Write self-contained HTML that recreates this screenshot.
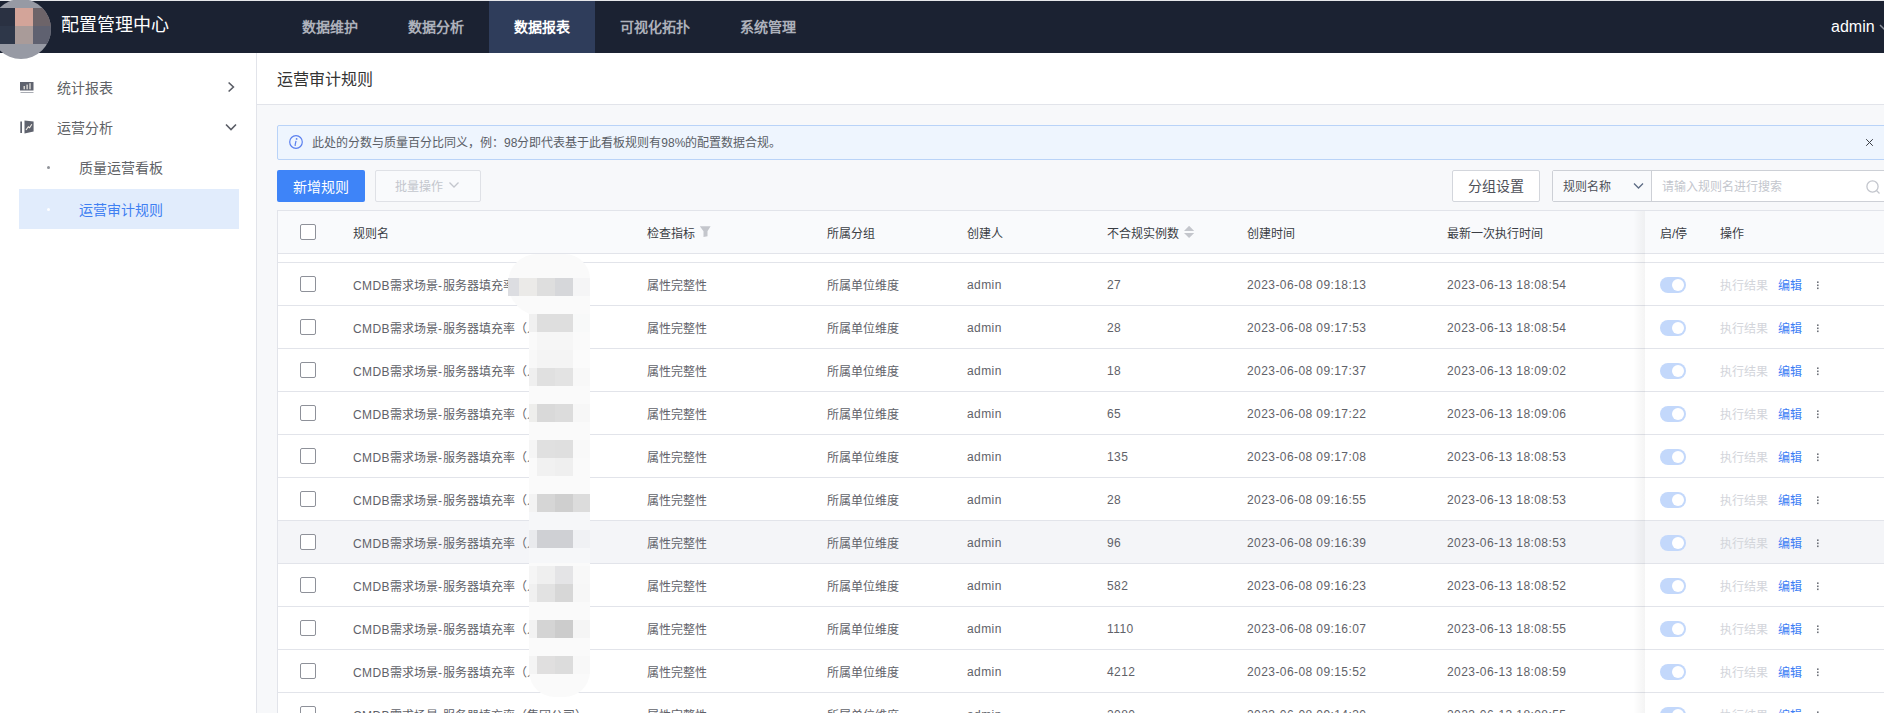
<!DOCTYPE html>
<html lang="zh-CN"><head><meta charset="utf-8">
<style>
*{margin:0;padding:0;box-sizing:border-box}
html,body{width:1884px;height:713px;overflow:hidden;background:#f7f8fa;font-family:"Liberation Sans",sans-serif;color:#606266}
.abs{position:absolute}
#hdr{position:absolute;left:0;top:0;width:1884px;height:53px;background:#1b2232;border-top:1px solid #e6e7ea;z-index:5}
.nav{position:absolute;top:0;height:52px;line-height:53px;font-size:14px;font-weight:bold;color:#adb1bb;white-space:nowrap}
.nav.act{background:#2f3d5b;color:#fff}
#side{position:absolute;left:0;top:53px;width:257px;height:660px;background:#fff;border-right:1px solid #e2e4ea}
.si{position:absolute;font-size:14px;color:#606266;white-space:nowrap;line-height:20px}
#main{position:absolute;left:257px;top:53px;width:1627px;height:660px}
#ttl{position:absolute;left:0;top:0;width:1627px;height:52px;background:#fff;border-bottom:1px solid #e2e4ea}
.t12{font-size:12px;white-space:nowrap;line-height:16px}
.lt{letter-spacing:0.42px}
</style></head>
<body>
<div id="hdr">
  <div class="abs" style="left:-9px;top:-2px;width:60px;height:60px;border-radius:50%;background:#979aa4;overflow:hidden">
    <div class="abs" style="left:9px;top:9px;width:15px;height:18px;background:#2a3142"></div>
    <div class="abs" style="left:24px;top:9px;width:18px;height:18px;background:#d3a499"></div>
    <div class="abs" style="left:42px;top:9px;width:18px;height:18px;background:#6d6469"></div>
    <div class="abs" style="left:9px;top:27px;width:15px;height:18px;background:#2e3749"></div>
    <div class="abs" style="left:24px;top:27px;width:18px;height:18px;background:#a99b99"></div>
    <div class="abs" style="left:42px;top:27px;width:18px;height:18px;background:#5f6170"></div>
  </div>
  <div class="abs" style="left:61px;top:12px;font-size:18px;line-height:24px;color:#fff;white-space:nowrap">配置管理中心</div>
  <div class="nav" style="left:277px;width:106px;text-align:center">数据维护</div>
  <div class="nav" style="left:383px;width:106px;text-align:center">数据分析</div>
  <div class="nav act" style="left:489px;width:106px;text-align:center">数据报表</div>
  <div class="nav" style="left:595px;width:120px;text-align:center">可视化拓扑</div>
  <div class="nav" style="left:715px;width:106px;text-align:center">系统管理</div>
  <div class="abs" style="left:1831px;top:16px;font-size:16px;line-height:20px;color:#fff">admin</div>
  <svg class="abs" style="left:1879px;top:22px" width="10" height="8"><path d="M1 2 L5 6 L9 2" stroke="#8a8f9a" stroke-width="1.5" fill="none"/></svg>
</div>

<div id="side">
  <!-- 统计报表 -->
  <svg class="abs" style="left:20px;top:29px" width="14" height="12" viewBox="0 0 14 12"><rect x="0" y="0" width="13.5" height="8.5" fill="#5f636e"/><rect x="0.5" y="10" width="13" height="1" fill="#a9acb3"/><rect x="3.6" y="4" width="1.2" height="3.3" fill="#f3efe8"/><rect x="6.5" y="2.6" width="1.2" height="4.7" fill="#f3efe8"/><rect x="9.4" y="1.2" width="1.2" height="6.1" fill="#f3efe8"/></svg>
  <div class="si" style="left:57px;top:25px">统计报表</div>
  <svg class="abs" style="left:226px;top:28px" width="10" height="12"><path d="M2.6 1.5 L7.4 6 L2.6 10.5" stroke="#5a5d66" stroke-width="1.6" fill="none"/></svg>
  <!-- 运营分析 -->
  <svg class="abs" style="left:20px;top:67px" width="14" height="14" viewBox="0 0 14 14"><rect x="0.3" y="1.5" width="1.7" height="11.5" fill="#5f636e"/><path d="M4.5 0.5 L13.6 1.6 L13.6 11.4 L4.5 13.5 Z" fill="#5f636e"/><path d="M6 10 L8.3 6.8 L9.6 7.8 L11.8 4.3" stroke="#f3efe8" stroke-width="1.1" fill="none"/></svg>
  <div class="si" style="left:57px;top:65px">运营分析</div>
  <svg class="abs" style="left:224px;top:69px" width="14" height="10"><path d="M2 2.5 L7 7.5 L12 2.5" stroke="#5a5d66" stroke-width="1.6" fill="none"/></svg>
  <div class="abs" style="left:47px;top:113px;width:3px;height:3px;border-radius:50%;background:#909399"></div>
  <div class="si" style="left:79px;top:105px">质量运营看板</div>
  <div class="abs" style="left:19px;top:136px;width:220px;height:40px;background:#e1ecfc"></div>
  <div class="abs" style="left:47px;top:155px;width:3px;height:3px;border-radius:50%;background:#fff"></div>
  <div class="si" style="left:79px;top:147px;color:#3f80f2">运营审计规则</div>
</div>

<div id="main">
  <div id="ttl"><div class="abs" style="left:20px;top:16px;font-size:16px;line-height:22px;color:#333;white-space:nowrap">运营审计规则</div></div>
</div>
<div class="abs" style="left:277px;top:125px;width:1620px;height:35px;background:#eef5fe;border:1px solid #b9d3f8;border-radius:2px"></div>
<svg class="abs" style="left:289px;top:135px" width="14" height="14" viewBox="0 0 14 14"><circle cx="7" cy="7" r="6.3" stroke="#5b80ef" stroke-width="1.2" fill="none"/><circle cx="7.6" cy="3.9" r="0.9" fill="#5b80ef"/><path d="M7 5.8 L6.1 10 Q6 10.7 6.7 10.4" stroke="#5b80ef" stroke-width="1.2" fill="none"/></svg>
<div class="abs t12" style="left:312px;top:135px;color:#5a5e66">此处的分数与质量百分比同义，例：98分即代表基于此看板规则有98%的配置数据合规。</div>
<svg class="abs" style="left:1865px;top:138px" width="9" height="9"><path d="M1.2 1.2 L7.8 7.8 M7.8 1.2 L1.2 7.8" stroke="#3a3d44" stroke-width="1"/></svg>
<div class="abs" style="left:277px;top:170px;width:88px;height:32px;background:#3e84f8;border-radius:2px;color:#fff;font-size:14px;line-height:34px;text-align:center">新增规则</div>
<div class="abs" style="left:375px;top:170px;width:106px;height:32px;background:#f9fafc;border:1px solid #dfe1e6;border-radius:2px"></div>
<div class="abs" style="left:395px;top:179px;font-size:12px;line-height:16px;color:#c3c6cd;white-space:nowrap">批量操作</div>
<svg class="abs" style="left:448px;top:181px" width="12" height="8"><path d="M1.5 1.5 L6 6 L10.5 1.5" stroke="#c3c6cd" stroke-width="1.3" fill="none"/></svg>
<div class="abs" style="left:1452px;top:170px;width:88px;height:32px;background:#fff;border:1px solid #d3d6dc;border-radius:2px;color:#4d5058;font-size:14px;line-height:31px;text-align:center">分组设置</div>
<div class="abs" style="left:1552px;top:170px;width:340px;height:32px;background:#fff;border:1px solid #cdd0d6;border-radius:2px"></div>
<div class="abs" style="left:1553px;top:171px;width:99px;height:30px;background:#f9fafc;border-right:1px solid #cdd0d6"></div>
<div class="abs t12" style="left:1563px;top:179px;color:#4d5058">规则名称</div>
<svg class="abs" style="left:1633px;top:182px" width="11" height="8"><path d="M1 1.5 L5.5 6 L10 1.5" stroke="#5d6b84" stroke-width="1.3" fill="none"/></svg>
<div class="abs t12" style="left:1662px;top:179px;color:#c3c6cd">请输入规则名进行搜索</div>
<svg class="abs" style="left:1865px;top:179px" width="16" height="16"><circle cx="7.5" cy="7.5" r="5.6" stroke="#c3c6cd" stroke-width="1.3" fill="none"/><path d="M11.5 11.5 L14.5 14.5" stroke="#c3c6cd" stroke-width="1.3"/></svg>
<div class="abs" style="left:277px;top:210px;width:1620px;height:510px;background:#fff;border-left:1px solid #e2e4ea;border-top:1px solid #e2e4ea"></div>
<div class="abs" style="left:278px;top:211px;width:1620px;height:43px;background:#f9fafc;border-bottom:1px solid #e2e4ea"></div>
<div class="abs" style="left:278px;top:262px;width:1620px;height:1px;background:#e2e4ea"></div>
<div class="abs" style="left:278px;top:263px;width:1620px;height:43px;background:#fff;border-bottom:1px solid #e2e4ea"></div>
<div class="abs" style="left:278px;top:306px;width:1620px;height:43px;background:#fff;border-bottom:1px solid #e2e4ea"></div>
<div class="abs" style="left:278px;top:349px;width:1620px;height:43px;background:#fff;border-bottom:1px solid #e2e4ea"></div>
<div class="abs" style="left:278px;top:392px;width:1620px;height:43px;background:#fff;border-bottom:1px solid #e2e4ea"></div>
<div class="abs" style="left:278px;top:435px;width:1620px;height:43px;background:#fff;border-bottom:1px solid #e2e4ea"></div>
<div class="abs" style="left:278px;top:478px;width:1620px;height:43px;background:#fff;border-bottom:1px solid #e2e4ea"></div>
<div class="abs" style="left:278px;top:521px;width:1620px;height:43px;background:#f4f5f8;border-bottom:1px solid #e2e4ea"></div>
<div class="abs" style="left:278px;top:564px;width:1620px;height:43px;background:#fff;border-bottom:1px solid #e2e4ea"></div>
<div class="abs" style="left:278px;top:607px;width:1620px;height:43px;background:#fff;border-bottom:1px solid #e2e4ea"></div>
<div class="abs" style="left:278px;top:650px;width:1620px;height:43px;background:#fff;border-bottom:1px solid #e2e4ea"></div>
<div class="abs" style="left:278px;top:693px;width:1620px;height:43px;background:#fff;border-bottom:1px solid #e2e4ea"></div>
<div class="abs" style="left:300px;top:224px;width:16px;height:16px;border:1px solid #8e9199;border-radius:2px;background:#fff"></div>
<div class="abs t12" style="left:353px;top:226px;color:#3a3d44">规则名</div>
<div class="abs t12" style="left:647px;top:226px;color:#3a3d44">检查指标</div>
<div class="abs t12" style="left:827px;top:226px;color:#3a3d44">所属分组</div>
<div class="abs t12" style="left:967px;top:226px;color:#3a3d44">创建人</div>
<div class="abs t12" style="left:1107px;top:226px;color:#3a3d44">不合规实例数</div>
<div class="abs t12" style="left:1247px;top:226px;color:#3a3d44">创建时间</div>
<div class="abs t12" style="left:1447px;top:226px;color:#3a3d44">最新一次执行时间</div>
<svg class="abs" style="left:700px;top:226px" width="11" height="12"><path d="M-0.2 0.3 H10.6 L7.5 5.2 V10.2 L3.5 11 V5.2 Z" fill="#c4c6cc"/></svg>
<svg class="abs" style="left:1184px;top:226px" width="11" height="12"><path d="M5.1 -0.2 L10.2 4.9 H0 Z M5.1 12 L10.2 6.9 H0 Z" fill="#c4c6cc"/></svg>
<div class="abs" style="left:300px;top:276px;width:16px;height:16px;border:1px solid #8e9199;border-radius:2px;background:#fff"></div>
<div class="abs t12" style="left:353px;top:278px;color:#5f6269"><span class="lt">CMDB</span>需求场景<span style="letter-spacing:1px">-</span>服务器填充率（人</div>
<div class="abs t12" style="left:647px;top:278px;color:#5f6269">属性完整性</div>
<div class="abs t12" style="left:827px;top:278px;color:#5f6269">所属单位维度</div>
<div class="abs t12" style="left:967px;top:277px;color:#5f6269"><span class="lt">admin</span></div>
<div class="abs t12" style="left:1107px;top:277px;color:#5f6269"><span class="lt">27</span></div>
<div class="abs t12" style="left:1247px;top:277px;color:#5f6269"><span class="lt">2023-06-08 09:18:13</span></div>
<div class="abs t12" style="left:1447px;top:277px;color:#5f6269"><span class="lt">2023-06-13 18:08:54</span></div>
<div class="abs" style="left:300px;top:319px;width:16px;height:16px;border:1px solid #8e9199;border-radius:2px;background:#fff"></div>
<div class="abs t12" style="left:353px;top:321px;color:#5f6269"><span class="lt">CMDB</span>需求场景<span style="letter-spacing:1px">-</span>服务器填充率（人</div>
<div class="abs t12" style="left:647px;top:321px;color:#5f6269">属性完整性</div>
<div class="abs t12" style="left:827px;top:321px;color:#5f6269">所属单位维度</div>
<div class="abs t12" style="left:967px;top:320px;color:#5f6269"><span class="lt">admin</span></div>
<div class="abs t12" style="left:1107px;top:320px;color:#5f6269"><span class="lt">28</span></div>
<div class="abs t12" style="left:1247px;top:320px;color:#5f6269"><span class="lt">2023-06-08 09:17:53</span></div>
<div class="abs t12" style="left:1447px;top:320px;color:#5f6269"><span class="lt">2023-06-13 18:08:54</span></div>
<div class="abs" style="left:300px;top:362px;width:16px;height:16px;border:1px solid #8e9199;border-radius:2px;background:#fff"></div>
<div class="abs t12" style="left:353px;top:364px;color:#5f6269"><span class="lt">CMDB</span>需求场景<span style="letter-spacing:1px">-</span>服务器填充率（人</div>
<div class="abs t12" style="left:647px;top:364px;color:#5f6269">属性完整性</div>
<div class="abs t12" style="left:827px;top:364px;color:#5f6269">所属单位维度</div>
<div class="abs t12" style="left:967px;top:363px;color:#5f6269"><span class="lt">admin</span></div>
<div class="abs t12" style="left:1107px;top:363px;color:#5f6269"><span class="lt">18</span></div>
<div class="abs t12" style="left:1247px;top:363px;color:#5f6269"><span class="lt">2023-06-08 09:17:37</span></div>
<div class="abs t12" style="left:1447px;top:363px;color:#5f6269"><span class="lt">2023-06-13 18:09:02</span></div>
<div class="abs" style="left:300px;top:405px;width:16px;height:16px;border:1px solid #8e9199;border-radius:2px;background:#fff"></div>
<div class="abs t12" style="left:353px;top:407px;color:#5f6269"><span class="lt">CMDB</span>需求场景<span style="letter-spacing:1px">-</span>服务器填充率（人</div>
<div class="abs t12" style="left:647px;top:407px;color:#5f6269">属性完整性</div>
<div class="abs t12" style="left:827px;top:407px;color:#5f6269">所属单位维度</div>
<div class="abs t12" style="left:967px;top:406px;color:#5f6269"><span class="lt">admin</span></div>
<div class="abs t12" style="left:1107px;top:406px;color:#5f6269"><span class="lt">65</span></div>
<div class="abs t12" style="left:1247px;top:406px;color:#5f6269"><span class="lt">2023-06-08 09:17:22</span></div>
<div class="abs t12" style="left:1447px;top:406px;color:#5f6269"><span class="lt">2023-06-13 18:09:06</span></div>
<div class="abs" style="left:300px;top:448px;width:16px;height:16px;border:1px solid #8e9199;border-radius:2px;background:#fff"></div>
<div class="abs t12" style="left:353px;top:450px;color:#5f6269"><span class="lt">CMDB</span>需求场景<span style="letter-spacing:1px">-</span>服务器填充率（人</div>
<div class="abs t12" style="left:647px;top:450px;color:#5f6269">属性完整性</div>
<div class="abs t12" style="left:827px;top:450px;color:#5f6269">所属单位维度</div>
<div class="abs t12" style="left:967px;top:449px;color:#5f6269"><span class="lt">admin</span></div>
<div class="abs t12" style="left:1107px;top:449px;color:#5f6269"><span class="lt">135</span></div>
<div class="abs t12" style="left:1247px;top:449px;color:#5f6269"><span class="lt">2023-06-08 09:17:08</span></div>
<div class="abs t12" style="left:1447px;top:449px;color:#5f6269"><span class="lt">2023-06-13 18:08:53</span></div>
<div class="abs" style="left:300px;top:491px;width:16px;height:16px;border:1px solid #8e9199;border-radius:2px;background:#fff"></div>
<div class="abs t12" style="left:353px;top:493px;color:#5f6269"><span class="lt">CMDB</span>需求场景<span style="letter-spacing:1px">-</span>服务器填充率（人</div>
<div class="abs t12" style="left:647px;top:493px;color:#5f6269">属性完整性</div>
<div class="abs t12" style="left:827px;top:493px;color:#5f6269">所属单位维度</div>
<div class="abs t12" style="left:967px;top:492px;color:#5f6269"><span class="lt">admin</span></div>
<div class="abs t12" style="left:1107px;top:492px;color:#5f6269"><span class="lt">28</span></div>
<div class="abs t12" style="left:1247px;top:492px;color:#5f6269"><span class="lt">2023-06-08 09:16:55</span></div>
<div class="abs t12" style="left:1447px;top:492px;color:#5f6269"><span class="lt">2023-06-13 18:08:53</span></div>
<div class="abs" style="left:300px;top:534px;width:16px;height:16px;border:1px solid #8e9199;border-radius:2px;background:#fff"></div>
<div class="abs t12" style="left:353px;top:536px;color:#5f6269"><span class="lt">CMDB</span>需求场景<span style="letter-spacing:1px">-</span>服务器填充率（人</div>
<div class="abs t12" style="left:647px;top:536px;color:#5f6269">属性完整性</div>
<div class="abs t12" style="left:827px;top:536px;color:#5f6269">所属单位维度</div>
<div class="abs t12" style="left:967px;top:535px;color:#5f6269"><span class="lt">admin</span></div>
<div class="abs t12" style="left:1107px;top:535px;color:#5f6269"><span class="lt">96</span></div>
<div class="abs t12" style="left:1247px;top:535px;color:#5f6269"><span class="lt">2023-06-08 09:16:39</span></div>
<div class="abs t12" style="left:1447px;top:535px;color:#5f6269"><span class="lt">2023-06-13 18:08:53</span></div>
<div class="abs" style="left:300px;top:577px;width:16px;height:16px;border:1px solid #8e9199;border-radius:2px;background:#fff"></div>
<div class="abs t12" style="left:353px;top:579px;color:#5f6269"><span class="lt">CMDB</span>需求场景<span style="letter-spacing:1px">-</span>服务器填充率（人</div>
<div class="abs t12" style="left:647px;top:579px;color:#5f6269">属性完整性</div>
<div class="abs t12" style="left:827px;top:579px;color:#5f6269">所属单位维度</div>
<div class="abs t12" style="left:967px;top:578px;color:#5f6269"><span class="lt">admin</span></div>
<div class="abs t12" style="left:1107px;top:578px;color:#5f6269"><span class="lt">582</span></div>
<div class="abs t12" style="left:1247px;top:578px;color:#5f6269"><span class="lt">2023-06-08 09:16:23</span></div>
<div class="abs t12" style="left:1447px;top:578px;color:#5f6269"><span class="lt">2023-06-13 18:08:52</span></div>
<div class="abs" style="left:300px;top:620px;width:16px;height:16px;border:1px solid #8e9199;border-radius:2px;background:#fff"></div>
<div class="abs t12" style="left:353px;top:622px;color:#5f6269"><span class="lt">CMDB</span>需求场景<span style="letter-spacing:1px">-</span>服务器填充率（人</div>
<div class="abs t12" style="left:647px;top:622px;color:#5f6269">属性完整性</div>
<div class="abs t12" style="left:827px;top:622px;color:#5f6269">所属单位维度</div>
<div class="abs t12" style="left:967px;top:621px;color:#5f6269"><span class="lt">admin</span></div>
<div class="abs t12" style="left:1107px;top:621px;color:#5f6269"><span class="lt">1110</span></div>
<div class="abs t12" style="left:1247px;top:621px;color:#5f6269"><span class="lt">2023-06-08 09:16:07</span></div>
<div class="abs t12" style="left:1447px;top:621px;color:#5f6269"><span class="lt">2023-06-13 18:08:55</span></div>
<div class="abs" style="left:300px;top:663px;width:16px;height:16px;border:1px solid #8e9199;border-radius:2px;background:#fff"></div>
<div class="abs t12" style="left:353px;top:665px;color:#5f6269"><span class="lt">CMDB</span>需求场景<span style="letter-spacing:1px">-</span>服务器填充率（人</div>
<div class="abs t12" style="left:647px;top:665px;color:#5f6269">属性完整性</div>
<div class="abs t12" style="left:827px;top:665px;color:#5f6269">所属单位维度</div>
<div class="abs t12" style="left:967px;top:664px;color:#5f6269"><span class="lt">admin</span></div>
<div class="abs t12" style="left:1107px;top:664px;color:#5f6269"><span class="lt">4212</span></div>
<div class="abs t12" style="left:1247px;top:664px;color:#5f6269"><span class="lt">2023-06-08 09:15:52</span></div>
<div class="abs t12" style="left:1447px;top:664px;color:#5f6269"><span class="lt">2023-06-13 18:08:59</span></div>
<div class="abs" style="left:300px;top:706px;width:16px;height:16px;border:1px solid #8e9199;border-radius:2px;background:#fff"></div>
<div class="abs t12" style="left:353px;top:708px;color:#5f6269"><span class="lt">CMDB</span>需求场景<span style="letter-spacing:1px">-</span>服务器填充率（集团公司）</div>
<div class="abs t12" style="left:647px;top:708px;color:#5f6269">属性完整性</div>
<div class="abs t12" style="left:827px;top:708px;color:#5f6269">所属单位维度</div>
<div class="abs t12" style="left:967px;top:707px;color:#5f6269"><span class="lt">admin</span></div>
<div class="abs t12" style="left:1107px;top:707px;color:#5f6269"><span class="lt">2080</span></div>
<div class="abs t12" style="left:1247px;top:707px;color:#5f6269"><span class="lt">2023-06-08 09:14:30</span></div>
<div class="abs t12" style="left:1447px;top:707px;color:#5f6269"><span class="lt">2023-06-13 18:08:55</span></div>
<div class="abs" style="left:508px;top:254px;width:82px;height:62px;border-radius:30px 26px 0 34px;background:#fafafa"></div>
<div class="abs" style="left:529px;top:300px;width:61px;height:397px;border-radius:0 0 26px 26px;background:#fafafa"></div>
<div class="abs" style="left:529px;top:512px;width:61px;height:51px;background:#f6f7f9"></div>
<div class="abs" style="left:508px;top:278px;width:11px;height:18px;background:#dcdde1"></div>
<div class="abs" style="left:519px;top:278px;width:18px;height:18px;background:#ebeae8"></div>
<div class="abs" style="left:537px;top:278px;width:18px;height:18px;background:#dedede"></div>
<div class="abs" style="left:555px;top:278px;width:18px;height:18px;background:#d6d7da"></div>
<div class="abs" style="left:573px;top:278px;width:17px;height:18px;background:#f5f5f6"></div>
<div class="abs" style="left:529px;top:314px;width:8px;height:18px;background:#f0f0f0"></div>
<div class="abs" style="left:537px;top:314px;width:18px;height:18px;background:#dedede"></div>
<div class="abs" style="left:555px;top:314px;width:18px;height:18px;background:#dedede"></div>
<div class="abs" style="left:573px;top:314px;width:17px;height:18px;background:#f8f9f9"></div>
<div class="abs" style="left:537px;top:332px;width:36px;height:18px;background:#f6f6f6"></div>
<div class="abs" style="left:529px;top:350px;width:8px;height:18px;background:#f8f8f8"></div>
<div class="abs" style="left:537px;top:350px;width:36px;height:18px;background:#f4f4f4"></div>
<div class="abs" style="left:573px;top:350px;width:17px;height:18px;background:#fbfbfb"></div>
<div class="abs" style="left:529px;top:368px;width:8px;height:18px;background:#efefef"></div>
<div class="abs" style="left:537px;top:368px;width:18px;height:18px;background:#e0e0e0"></div>
<div class="abs" style="left:555px;top:368px;width:18px;height:18px;background:#e3e3e3"></div>
<div class="abs" style="left:573px;top:368px;width:17px;height:18px;background:#f8f8f8"></div>
<div class="abs" style="left:529px;top:404px;width:8px;height:18px;background:#eeeeec"></div>
<div class="abs" style="left:537px;top:404px;width:18px;height:18px;background:#d9d9d9"></div>
<div class="abs" style="left:555px;top:404px;width:18px;height:18px;background:#dcdcdc"></div>
<div class="abs" style="left:573px;top:404px;width:17px;height:18px;background:#f7f7f7"></div>
<div class="abs" style="left:529px;top:440px;width:8px;height:18px;background:#f5f5f5"></div>
<div class="abs" style="left:537px;top:440px;width:18px;height:18px;background:#e0e0e0"></div>
<div class="abs" style="left:555px;top:440px;width:18px;height:18px;background:#dfdfdf"></div>
<div class="abs" style="left:573px;top:440px;width:17px;height:18px;background:#f9f9f9"></div>
<div class="abs" style="left:537px;top:458px;width:18px;height:18px;background:#f1f1f1"></div>
<div class="abs" style="left:555px;top:458px;width:18px;height:18px;background:#efefef"></div>
<div class="abs" style="left:529px;top:494px;width:8px;height:18px;background:#f3f3f3"></div>
<div class="abs" style="left:537px;top:494px;width:18px;height:18px;background:#d6d6d6"></div>
<div class="abs" style="left:555px;top:494px;width:18px;height:18px;background:#cfcfcf"></div>
<div class="abs" style="left:573px;top:494px;width:17px;height:18px;background:#dcdcdc"></div>
<div class="abs" style="left:529px;top:530px;width:8px;height:18px;background:#e9eaed"></div>
<div class="abs" style="left:537px;top:530px;width:36px;height:18px;background:#cfd0d4"></div>
<div class="abs" style="left:573px;top:530px;width:17px;height:18px;background:#f0f1f4"></div>
<div class="abs" style="left:529px;top:566px;width:8px;height:18px;background:#f5f5f5"></div>
<div class="abs" style="left:537px;top:566px;width:18px;height:18px;background:#efefef"></div>
<div class="abs" style="left:555px;top:566px;width:18px;height:18px;background:#e4e4e6"></div>
<div class="abs" style="left:573px;top:566px;width:17px;height:18px;background:#f8f8f8"></div>
<div class="abs" style="left:529px;top:584px;width:8px;height:18px;background:#f0f0f0"></div>
<div class="abs" style="left:537px;top:584px;width:18px;height:18px;background:#e2e2e2"></div>
<div class="abs" style="left:555px;top:584px;width:18px;height:18px;background:#d7d7d7"></div>
<div class="abs" style="left:573px;top:584px;width:17px;height:18px;background:#f7f7f7"></div>
<div class="abs" style="left:529px;top:620px;width:8px;height:18px;background:#f2f2f2"></div>
<div class="abs" style="left:537px;top:620px;width:18px;height:18px;background:#d4d4d4"></div>
<div class="abs" style="left:555px;top:620px;width:18px;height:18px;background:#cccccc"></div>
<div class="abs" style="left:573px;top:620px;width:17px;height:18px;background:#f5f5f5"></div>
<div class="abs" style="left:529px;top:656px;width:8px;height:18px;background:#f4f4f4"></div>
<div class="abs" style="left:537px;top:656px;width:18px;height:18px;background:#e0dfdf"></div>
<div class="abs" style="left:555px;top:656px;width:18px;height:18px;background:#dcdcdc"></div>
<div class="abs" style="left:573px;top:656px;width:17px;height:18px;background:#f8f8f8"></div>
<div class="abs" style="left:1633px;top:211px;width:12px;height:510px;background:linear-gradient(to right,rgba(0,0,0,0),rgba(0,0,0,0.045))"></div>
<div class="abs" style="left:1645px;top:211px;width:250px;height:43px;background:#f9fafc;border-bottom:1px solid #e2e4ea"></div>
<div class="abs" style="left:1645px;top:254px;width:250px;height:8px;background:#fff"></div>
<div class="abs t12" style="left:1660px;top:226px;color:#3a3d44">启/停</div>
<div class="abs t12" style="left:1720px;top:226px;color:#3a3d44">操作</div>
<div class="abs" style="left:1645px;top:263px;width:250px;height:43px;background:#fff;border-bottom:1px solid #e2e4ea"></div>
<div class="abs" style="left:1660px;top:277px;width:26px;height:16px;border-radius:8px;background:#c3d8fb"></div>
<div class="abs" style="left:1672px;top:279px;width:12px;height:12px;border-radius:50%;background:#fff"></div>
<div class="abs t12" style="left:1720px;top:278px;color:#d3d5db">执行结果</div>
<div class="abs t12" style="left:1778px;top:278px;color:#3d7ef5;font-weight:500">编辑</div>
<svg class="abs" style="left:1816px;top:280px" width="4" height="10"><rect x="1" y="1.4" width="1.6" height="1.6" fill="#6f727a"/><rect x="1" y="4.5" width="1.6" height="1.6" fill="#6f727a"/><rect x="1" y="7.5" width="1.6" height="1.6" fill="#6f727a"/></svg>
<div class="abs" style="left:1645px;top:306px;width:250px;height:43px;background:#fff;border-bottom:1px solid #e2e4ea"></div>
<div class="abs" style="left:1660px;top:320px;width:26px;height:16px;border-radius:8px;background:#c3d8fb"></div>
<div class="abs" style="left:1672px;top:322px;width:12px;height:12px;border-radius:50%;background:#fff"></div>
<div class="abs t12" style="left:1720px;top:321px;color:#d3d5db">执行结果</div>
<div class="abs t12" style="left:1778px;top:321px;color:#3d7ef5;font-weight:500">编辑</div>
<svg class="abs" style="left:1816px;top:323px" width="4" height="10"><rect x="1" y="1.4" width="1.6" height="1.6" fill="#6f727a"/><rect x="1" y="4.5" width="1.6" height="1.6" fill="#6f727a"/><rect x="1" y="7.5" width="1.6" height="1.6" fill="#6f727a"/></svg>
<div class="abs" style="left:1645px;top:349px;width:250px;height:43px;background:#fff;border-bottom:1px solid #e2e4ea"></div>
<div class="abs" style="left:1660px;top:363px;width:26px;height:16px;border-radius:8px;background:#c3d8fb"></div>
<div class="abs" style="left:1672px;top:365px;width:12px;height:12px;border-radius:50%;background:#fff"></div>
<div class="abs t12" style="left:1720px;top:364px;color:#d3d5db">执行结果</div>
<div class="abs t12" style="left:1778px;top:364px;color:#3d7ef5;font-weight:500">编辑</div>
<svg class="abs" style="left:1816px;top:366px" width="4" height="10"><rect x="1" y="1.4" width="1.6" height="1.6" fill="#6f727a"/><rect x="1" y="4.5" width="1.6" height="1.6" fill="#6f727a"/><rect x="1" y="7.5" width="1.6" height="1.6" fill="#6f727a"/></svg>
<div class="abs" style="left:1645px;top:392px;width:250px;height:43px;background:#fff;border-bottom:1px solid #e2e4ea"></div>
<div class="abs" style="left:1660px;top:406px;width:26px;height:16px;border-radius:8px;background:#c3d8fb"></div>
<div class="abs" style="left:1672px;top:408px;width:12px;height:12px;border-radius:50%;background:#fff"></div>
<div class="abs t12" style="left:1720px;top:407px;color:#d3d5db">执行结果</div>
<div class="abs t12" style="left:1778px;top:407px;color:#3d7ef5;font-weight:500">编辑</div>
<svg class="abs" style="left:1816px;top:409px" width="4" height="10"><rect x="1" y="1.4" width="1.6" height="1.6" fill="#6f727a"/><rect x="1" y="4.5" width="1.6" height="1.6" fill="#6f727a"/><rect x="1" y="7.5" width="1.6" height="1.6" fill="#6f727a"/></svg>
<div class="abs" style="left:1645px;top:435px;width:250px;height:43px;background:#fff;border-bottom:1px solid #e2e4ea"></div>
<div class="abs" style="left:1660px;top:449px;width:26px;height:16px;border-radius:8px;background:#c3d8fb"></div>
<div class="abs" style="left:1672px;top:451px;width:12px;height:12px;border-radius:50%;background:#fff"></div>
<div class="abs t12" style="left:1720px;top:450px;color:#d3d5db">执行结果</div>
<div class="abs t12" style="left:1778px;top:450px;color:#3d7ef5;font-weight:500">编辑</div>
<svg class="abs" style="left:1816px;top:452px" width="4" height="10"><rect x="1" y="1.4" width="1.6" height="1.6" fill="#6f727a"/><rect x="1" y="4.5" width="1.6" height="1.6" fill="#6f727a"/><rect x="1" y="7.5" width="1.6" height="1.6" fill="#6f727a"/></svg>
<div class="abs" style="left:1645px;top:478px;width:250px;height:43px;background:#fff;border-bottom:1px solid #e2e4ea"></div>
<div class="abs" style="left:1660px;top:492px;width:26px;height:16px;border-radius:8px;background:#c3d8fb"></div>
<div class="abs" style="left:1672px;top:494px;width:12px;height:12px;border-radius:50%;background:#fff"></div>
<div class="abs t12" style="left:1720px;top:493px;color:#d3d5db">执行结果</div>
<div class="abs t12" style="left:1778px;top:493px;color:#3d7ef5;font-weight:500">编辑</div>
<svg class="abs" style="left:1816px;top:495px" width="4" height="10"><rect x="1" y="1.4" width="1.6" height="1.6" fill="#6f727a"/><rect x="1" y="4.5" width="1.6" height="1.6" fill="#6f727a"/><rect x="1" y="7.5" width="1.6" height="1.6" fill="#6f727a"/></svg>
<div class="abs" style="left:1645px;top:521px;width:250px;height:43px;background:#f4f5f8;border-bottom:1px solid #e2e4ea"></div>
<div class="abs" style="left:1660px;top:535px;width:26px;height:16px;border-radius:8px;background:#c3d8fb"></div>
<div class="abs" style="left:1672px;top:537px;width:12px;height:12px;border-radius:50%;background:#fff"></div>
<div class="abs t12" style="left:1720px;top:536px;color:#d3d5db">执行结果</div>
<div class="abs t12" style="left:1778px;top:536px;color:#3d7ef5;font-weight:500">编辑</div>
<svg class="abs" style="left:1816px;top:538px" width="4" height="10"><rect x="1" y="1.4" width="1.6" height="1.6" fill="#6f727a"/><rect x="1" y="4.5" width="1.6" height="1.6" fill="#6f727a"/><rect x="1" y="7.5" width="1.6" height="1.6" fill="#6f727a"/></svg>
<div class="abs" style="left:1645px;top:564px;width:250px;height:43px;background:#fff;border-bottom:1px solid #e2e4ea"></div>
<div class="abs" style="left:1660px;top:578px;width:26px;height:16px;border-radius:8px;background:#c3d8fb"></div>
<div class="abs" style="left:1672px;top:580px;width:12px;height:12px;border-radius:50%;background:#fff"></div>
<div class="abs t12" style="left:1720px;top:579px;color:#d3d5db">执行结果</div>
<div class="abs t12" style="left:1778px;top:579px;color:#3d7ef5;font-weight:500">编辑</div>
<svg class="abs" style="left:1816px;top:581px" width="4" height="10"><rect x="1" y="1.4" width="1.6" height="1.6" fill="#6f727a"/><rect x="1" y="4.5" width="1.6" height="1.6" fill="#6f727a"/><rect x="1" y="7.5" width="1.6" height="1.6" fill="#6f727a"/></svg>
<div class="abs" style="left:1645px;top:607px;width:250px;height:43px;background:#fff;border-bottom:1px solid #e2e4ea"></div>
<div class="abs" style="left:1660px;top:621px;width:26px;height:16px;border-radius:8px;background:#c3d8fb"></div>
<div class="abs" style="left:1672px;top:623px;width:12px;height:12px;border-radius:50%;background:#fff"></div>
<div class="abs t12" style="left:1720px;top:622px;color:#d3d5db">执行结果</div>
<div class="abs t12" style="left:1778px;top:622px;color:#3d7ef5;font-weight:500">编辑</div>
<svg class="abs" style="left:1816px;top:624px" width="4" height="10"><rect x="1" y="1.4" width="1.6" height="1.6" fill="#6f727a"/><rect x="1" y="4.5" width="1.6" height="1.6" fill="#6f727a"/><rect x="1" y="7.5" width="1.6" height="1.6" fill="#6f727a"/></svg>
<div class="abs" style="left:1645px;top:650px;width:250px;height:43px;background:#fff;border-bottom:1px solid #e2e4ea"></div>
<div class="abs" style="left:1660px;top:664px;width:26px;height:16px;border-radius:8px;background:#c3d8fb"></div>
<div class="abs" style="left:1672px;top:666px;width:12px;height:12px;border-radius:50%;background:#fff"></div>
<div class="abs t12" style="left:1720px;top:665px;color:#d3d5db">执行结果</div>
<div class="abs t12" style="left:1778px;top:665px;color:#3d7ef5;font-weight:500">编辑</div>
<svg class="abs" style="left:1816px;top:667px" width="4" height="10"><rect x="1" y="1.4" width="1.6" height="1.6" fill="#6f727a"/><rect x="1" y="4.5" width="1.6" height="1.6" fill="#6f727a"/><rect x="1" y="7.5" width="1.6" height="1.6" fill="#6f727a"/></svg>
<div class="abs" style="left:1645px;top:693px;width:250px;height:43px;background:#fff;border-bottom:1px solid #e2e4ea"></div>
<div class="abs" style="left:1660px;top:707px;width:26px;height:16px;border-radius:8px;background:#c3d8fb"></div>
<div class="abs" style="left:1672px;top:709px;width:12px;height:12px;border-radius:50%;background:#fff"></div>
<div class="abs t12" style="left:1720px;top:708px;color:#d3d5db">执行结果</div>
<div class="abs t12" style="left:1778px;top:708px;color:#3d7ef5;font-weight:500">编辑</div>
<svg class="abs" style="left:1816px;top:710px" width="4" height="10"><rect x="1" y="1.4" width="1.6" height="1.6" fill="#6f727a"/><rect x="1" y="4.5" width="1.6" height="1.6" fill="#6f727a"/><rect x="1" y="7.5" width="1.6" height="1.6" fill="#6f727a"/></svg>
</body></html>
